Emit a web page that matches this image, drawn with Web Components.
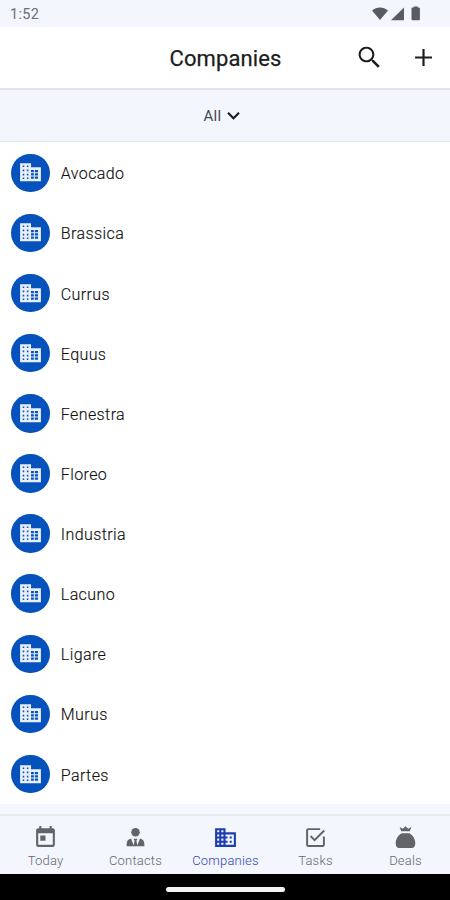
<!DOCTYPE html>
<html lang="en">
<head>
<meta charset="utf-8">
<title>Companies</title>
<style>
html, body {
  margin: 0;
  height: 100%;
}
body {
  font-family: Roboto, "Liberation Sans", sans-serif;
  background: #fff;
  color: #333;
  overflow: hidden;
}
</style>
</head>
<body>
<crm-app>
  <status-bar slot="top" time="1:52"></status-bar>
  <app-header slot="top">Companies</app-header>
  <list-filter slot="top">All</list-filter>

  <company-row>Avocado</company-row>
  <company-row>Brassica</company-row>
  <company-row>Currus</company-row>
  <company-row>Equus</company-row>
  <company-row>Fenestra</company-row>
  <company-row>Floreo</company-row>
  <company-row>Industria</company-row>
  <company-row>Lacuno</company-row>
  <company-row>Ligare</company-row>
  <company-row>Murus</company-row>
  <company-row>Partes</company-row>

  <nav-tab slot="tabs" icon="today">Today</nav-tab>
  <nav-tab slot="tabs" icon="contacts">Contacts</nav-tab>
  <nav-tab slot="tabs" icon="business" active>Companies</nav-tab>
  <nav-tab slot="tabs" icon="tasks">Tasks</nav-tab>
  <nav-tab slot="tabs" icon="deals">Deals</nav-tab>
</crm-app>

<script>
const icons = {
  business: `<path d="M12 7V3H2v18h20V7H12zM6 19H4v-2h2v2zm0-4H4v-2h2v2zm0-4H4V9h2v2zm0-4H4V5h2v2zm4 12H8v-2h2v2zm0-4H8v-2h2v2zm0-4H8V9h2v2zm0-4H8V5h2v2zm10 12h-8v-2h2v-2h-2v-2h2v-2h-2V9h8v10zm-2-8h-2v2h2v-2zm0 4h-2v2h2v-2z"/>`,
  // same building with its windows lit, for the round avatars
  building: `<path fill-rule="evenodd" d="M2 3h10.500v4H22v13.500H2zM4.500 5.200v1.600H6V5.200zm0 4v1.600H6V9.200zm0 4v1.600H6v-1.600zm0 3.500v1.600H6v-1.600zM8.500 5.200v1.600H10V5.200zm0 4v1.600H10V9.200zm0 4v1.600H10v-1.600zm0 3.500v1.600H10v-1.600zM12.500 9.500v2.300h2.700V9.500zm3.700 0v2.300h3V9.500zM12.500 12.700v2.200h2.700v-2.200zm3.700 0v2.200h3v-2.200zM12.500 15.900v2.200h2.700v-2.200zm3.700 0v2.200h3v-2.200z"/>`,
  today: `<path d="M19 3h-1V1h-2v2H8V1H6v2H5c-1.110 0-1.990.9-1.990 2L3 19c0 1.100.89 2 2 2h14c1.100 0 2-.9 2-2V5c0-1.100-.9-2-2-2zm0 16H5V8h14v11zM7 10h5v5H7z"/>`,
  contacts: `<circle cx="12" cy="7" r="4.100"/><path d="M3.500 20.500v-2.300c0-2.800 1.600-4.600 4.200-5.200l2.500 6.500.9-4.400-1-2h3.800l-1 2 .9 4.400 2.500-6.500c2.600.6 4.200 2.400 4.200 5.200v2.300z"/>`,
  tasks: `<path d="M21 11v8c0 1.100-.9 2-2 2H5c-1.100 0-2-.9-2-2V5c0-1.100.9-2 2-2h11.500v1.800H4.900v14.300h14.200V11zM7.900 9.900L6.600 11.200l4.500 4.600L21 5.900l-1.300-1.300-8.600 8.500z"/>`,
  deals: `<path d="M6.300 2l3.100 1.500L12 1.100l2.600 2.400L17.700 2l-1.600 4H7.900zM8.300 7.900h7.400c3.200 1.700 5.700 5.500 5.700 9.500 0 3.100-1.200 4.600-3.300 4.600H5.900c-2.100 0-3.300-1.500-3.300-4.600 0-4 2.500-7.800 5.700-9.500z"/>`,
  search: `<path d="M15.500 14h-.79l-.28-.27C15.410 12.590 16 11.110 16 9.500 16 5.910 13.090 3 9.500 3S3 5.910 3 9.500 5.910 16 9.500 16c1.610 0 3.090-.59 4.230-1.570l.27.28v.79l5 4.990L20.490 19l-4.990-5zm-6 .3C6.850 14.300 4.700 12.150 4.700 9.500S6.850 4.700 9.500 4.700s4.800 2.150 4.800 4.800-2.150 4.800-4.800 4.800z"/>`,
  add: `<path d="M19 12.900h-6.100V19h-1.800v-6.100H5v-1.800h6.100V5h1.800v6.100H19z"/>`,
  expand: `<path d="M16.590 8.590L12 13.170 7.410 8.590 6 10l6 6 6-6z"/>`
}

const svg = name => `<svg viewBox="0 0 24 24" fill="currentColor">${icons[name]}</svg>`

class BaseElement extends HTMLElement {
  constructor() {
    super()
    this.attachShadow({mode: 'open'})
  }
  connectedCallback() {
    this.shadowRoot.innerHTML = this.render()
  }
}

class CrmApp extends BaseElement {
  render() {
    return /*html*/`
    <style>
    :host {
      display: flex;
      flex-direction: column;
      width: 100%;
      height: 100vh;
    }
    .list {
      flex: 1;
      min-height: 0;
      overflow: hidden;
      padding-top: .8px;
      box-sizing: border-box;
    }
    .strip {
      height: 10px;
      background: #f4f7fd;
    }
    nav {
      display: grid;
      grid-template-columns: repeat(5, 1fr);
      height: 60px;
      box-sizing: border-box;
      border-top: 2px solid #e6e9ef;
      background: #f3f6fd;
    }
    .system {
      display: flex;
      align-items: center;
      justify-content: center;
      height: 26px;
      padding-top: 4px;
      box-sizing: border-box;
      background: #000;
    }
    .home {
      width: 119px;
      height: 5px;
      border-radius: 3px;
      background: #f4f4f4;
    }
    </style>
    <slot name="top"></slot>
    <div class="list"><slot></slot></div>
    <div class="strip"></div>
    <nav><slot name="tabs"></slot></nav>
    <div class="system"><div class="home"></div></div>`
  }
}

class StatusBar extends BaseElement {
  render() {
    return /*html*/`
    <style>
    :host {
      display: flex;
      flex: none;
      align-items: center;
      justify-content: space-between;
      height: 27px;
      padding: 0 29px 0 10px;
      box-sizing: border-box;
      background: #f3f6fd;
      color: #6c6f75;
      font-size: 14.500px;
      letter-spacing: .35px;
    }
    span { padding-top: 2px; }
    svg { display: block; fill: #595b60; }
    </style>
    <span>${this.getAttribute('time')}</span>
    <svg width="49" height="15" viewBox="0 0 49 15">
      <path d="M0 4.500C4.600.4 11.400.4 16 4.500L8 14z"/>
      <path d="M32 1.500V14.300H19z"/>
      <path d="M41.700 1.500V.5h4v1h1.200q1 0 1 1V13.300q0 1-1 1h-6.400q-1 0-1-1V2.500q0-1 1-1z"/>
    </svg>`
  }
}

class AppHeader extends BaseElement {
  render() {
    return /*html*/`
    <style>
    :host {
      display: grid;
      flex: none;
      grid-template-columns: 1fr auto 1fr;
      align-items: center;
      height: 63px;
      box-sizing: border-box;
      border-bottom: 2px solid #e2e4e8;
      background: #fff;
      color: #1c1c1e;
    }
    h1 {
      grid-column: 2;
      margin: 0;
      padding: 1px 0 0 1px;
      font-size: 22px;
      font-weight: 400;
      letter-spacing: .1px;
      -webkit-text-stroke: .25px currentColor;
    }
    .actions {
      display: flex;
      justify-content: flex-end;
      gap: 25px;
      padding-right: 12.500px;
    }
    svg { display: block; width: 29px; height: 29px; }
    </style>
    <h1><slot></slot></h1>
    <div class="actions">${svg('search')}${svg('add')}</div>`
  }
}

class ListFilter extends BaseElement {
  render() {
    return /*html*/`
    <style>
    :host {
      display: flex;
      flex: none;
      align-items: center;
      justify-content: center;
      height: 52px;
      box-sizing: border-box;
      border-bottom: 1px solid #e6e8ec;
      background: #f3f6fd;
      color: #484a4e;
      font-size: 15px;
      letter-spacing: .3px;
    }
    svg { display: block; width: 25px; height: 25px; color: #1c1c1e; }
    </style>
    <slot></slot>${svg('expand')}`
  }
}

class CompanyRow extends BaseElement {
  render() {
    return /*html*/`
    <style>
    :host {
      display: flex;
      align-items: center;
      gap: 11px;
      height: 60.130px;
      padding-left: 11.300px;
      box-sizing: border-box;
      font-size: 16px;
      font-weight: 300;
      letter-spacing: .4px;
      color: #111;
    }
    .avatar {
      display: flex;
      align-items: center;
      justify-content: center;
      width: 38.500px;
      height: 38.500px;
      border-radius: 50%;
      background: #0652bd;
      color: #e9eefb;
    }
    svg { display: block; width: 25px; height: 25px; }
    span {
      padding-top: 2px;
      -webkit-text-stroke: .15px currentColor;
    }
    </style>
    <div class="avatar">${svg('building')}</div>
    <span><slot></slot></span>`
  }
}

class NavTab extends BaseElement {
  render() {
    return /*html*/`
    <style>
    :host {
      display: flex;
      flex-direction: column;
      align-items: center;
      gap: 3px;
      padding: 9px 0 0 1px;
      color: #66686c;
      font-size: 13px;
      font-weight: 300;
      line-height: 16px;
      letter-spacing: .2px;
    }
    :host([active]) { color: #2f45b8; }
    svg { display: block; width: 25px; height: 25px; color: #626468; }
    :host([active]) svg { color: #1c3db0; }
    </style>
    ${svg(this.getAttribute('icon'))}
    <span><slot></slot></span>`
  }
}

customElements.define('crm-app', CrmApp)
customElements.define('status-bar', StatusBar)
customElements.define('app-header', AppHeader)
customElements.define('list-filter', ListFilter)
customElements.define('company-row', CompanyRow)
customElements.define('nav-tab', NavTab)
</script>
</body>
</html>
